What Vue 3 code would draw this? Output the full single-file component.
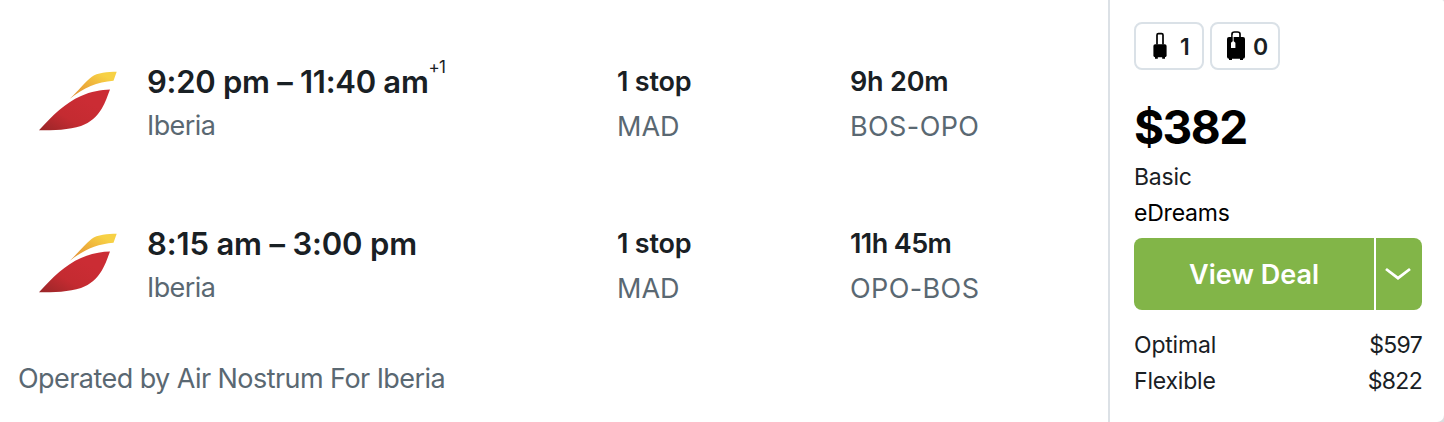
<template>
  <div class="card">
    <div class="legs">
      <div v-for="(leg, index) in legs" :key="index" class="leg">
        <svg class="logo" viewBox="0 0 80 62" width="80" height="62">
          <defs>
            <linearGradient :id="'red' + index" x1="0" y1="1" x2="0.7" y2="0.3">
              <stop offset="0" stop-color="#982628" />
              <stop offset="0.5" stop-color="#c42b31" />
              <stop offset="1" stop-color="#cb2c34" />
            </linearGradient>
            <linearGradient :id="'yellow' + index" x1="0" y1="1" x2="1" y2="0">
              <stop offset="0" stop-color="#e08a33" />
              <stop offset="0.5" stop-color="#efb43c" />
              <stop offset="0.8" stop-color="#f7d145" />
            </linearGradient>
          </defs>
          <path
            :fill="`url(#yellow${index})`"
            d="M31.5 29C41 20 47 12 53.500 7C59 2.500 70 1.700 78.700 1.700L75.500 10.700C59 12 46 17.500 31.500 29Z"
          />
          <path
            :fill="`url(#red${index})`"
            d="M1 60.300C15 45 27 33 43 26C53 21.500 63 19.700 72 19.500C69.500 26 67.500 32.500 63.700 38.700C59 46.500 52.500 52.500 43 56C31 60 16 60.300 1 60.300Z"
          />
        </svg>
        <div class="times">
          <div class="time">{{ leg.time }}<sup v-if="leg.plus">{{ leg.plus }}</sup></div>
          <div class="sub airline">{{ leg.airline }}</div>
        </div>
        <div class="stops">
          <div class="main">{{ leg.stops }}</div>
          <div class="sub code">{{ leg.via }}</div>
        </div>
        <div class="duration">
          <div class="main">{{ leg.duration }}</div>
          <div class="sub code route">{{ leg.route }}</div>
        </div>
      </div>
      <div class="sub operated">Operated by Air Nostrum For Iberia</div>
    </div>

    <div class="deal">
      <div class="bags">
        <div class="bag carry-on">
          <svg class="bag-icon" viewBox="0 0 20 32" width="20" height="32">
            <path d="M7 16.500V7Q7 5.600 8.400 5.600H11.600Q13 5.600 13 7V16.500" fill="none" stroke="#000" stroke-width="1.700" />
            <rect x="3.400" y="16.300" width="13.200" height="13" rx="1.800" />
            <path d="M5 28.500h2.800v2.200H5zM12.200 28.500H15v2.200h-2.800z" />
          </svg>
          <span>1</span>
        </div>
        <div class="bag">
          <svg class="bag-icon" viewBox="0 0 20 32" width="20" height="32">
            <path d="M6 9V6Q6 4 8.500 4H11.500Q14 4 14 6V9" fill="none" stroke="#000" stroke-width="1.700" />
            <rect x="1" y="9" width="18" height="21.800" rx="2" />
            <path d="M3 30h3v2H3zM14 30h3v2h-3z" />
            <path d="M7.200 7V13" stroke="#fff" stroke-width="0.900" />
            <path d="M5 14.700L7.200 12.800L9.400 14.700V20H5z" fill="#fff" />
          </svg>
          <span>0</span>
        </div>
      </div>
      <div class="price">$382</div>
      <div class="fare">Basic</div>
      <div class="provider">eDreams</div>
      <div class="actions">
        <button class="view">View Deal</button>
        <button class="more">
          <svg viewBox="0 0 26 14" width="26" height="14">
            <path d="M1 2L13 11.200L25 2" fill="none" stroke="#fff" stroke-width="2.800" />
          </svg>
        </button>
      </div>
      <div v-for="fare in fares" :key="fare.name" class="fare-row">
        <span>{{ fare.name }}</span>
        <span class="amount">{{ fare.price }}</span>
      </div>
    </div>
  </div>
</template>

<script setup>
const legs = [
  {
    time: '9:20 pm – 11:40 am',
    plus: '+1',
    airline: 'Iberia',
    stops: '1 stop',
    via: 'MAD',
    duration: '9h 20m',
    route: 'BOS-OPO'
  },
  {
    time: '8:15 am – 3:00 pm',
    airline: 'Iberia',
    stops: '1 stop',
    via: 'MAD',
    duration: '11h 45m',
    route: 'OPO-BOS'
  }
]

const fares = [
  { name: 'Optimal', price: '$597' },
  { name: 'Flexible', price: '$822' }
]
</script>

<style>
body {
  margin: 0;
  background: #d9dcdf;
}
</style>

<style scoped>
.card {
  display: flex;
  width: 1444px;
  height: 422px;
  overflow: hidden;
  box-sizing: border-box;
  background: #fff;
  border-radius: 0 2px 7px 0;
  font-family: Inter, "Liberation Sans", sans-serif;
  color: #192024;
  white-space: nowrap;
}

.legs {
  width: 1108px;
  padding-top: 60px;
  box-sizing: border-box;
}

.leg {
  display: flex;
  height: 88px;
  margin-bottom: 74px;
  padding-left: 38px;
}

.logo {
  margin-top: 10px;
  margin-right: 29px;
}

.times {
  width: 470px;
}

.stops {
  width: 233px;
}

.time {
  height: 44px;
  line-height: 44px;
  font-size: 31px;
  font-weight: 600;
  letter-spacing: -0.27px;
}

.leg:nth-child(2) .time {
  letter-spacing: -0.15px;
}

.time sup {
  font-size: 17px;
  font-weight: 400;
  line-height: 0;
  vertical-align: 20px;
  letter-spacing: -0.7px;
}

.main {
  height: 44px;
  line-height: 44px;
  font-size: 27px;
  font-weight: 600;
  letter-spacing: -0.2px;
}

.leg:nth-child(2) .duration .main {
  letter-spacing: -0.6px;
}

.sub {
  line-height: 44px;
  font-size: 27px;
  color: #5a6872;
}

.airline {
  letter-spacing: -0.6px;
}

.code {
  line-height: 46px;
}

.route {
  letter-spacing: 0.4px;
}

.operated {
  margin-top: -27px;
  padding-left: 18px;
  letter-spacing: -0.56px;
}

.deal {
  flex: 1;
  padding: 22px 22px 0 24px;
  border-left: 2px solid #dce1e6;
}

.bags {
  display: flex;
  gap: 6px;
}

.bag {
  display: flex;
  align-items: center;
  width: 70px;
  height: 48px;
  box-sizing: border-box;
  padding-left: 14px;
  border: 2px solid #dae1e7;
  border-radius: 8px;
  font-size: 23px;
  font-weight: 600;
}

.bag span {
  padding-top: 1px;
}

.bag-icon {
  margin-right: 7px;
  margin-top: -4px;
}

.carry-on .bag-icon {
  margin-right: 10px;
}

.price {
  margin-top: 27px;
  height: 62px;
  line-height: 61px;
  font-size: 46px;
  font-weight: 700;
  letter-spacing: -1.5px;
  color: #000;
}

.fare,
.provider,
.fare-row {
  height: 36px;
  line-height: 36px;
  font-size: 23px;
  letter-spacing: -0.2px;
}

.provider {
  color: #000;
}

.actions {
  display: flex;
  gap: 2px;
  margin: 7px 0 17px;
}

.actions button {
  display: flex;
  align-items: center;
  justify-content: center;
  height: 72px;
  padding: 0;
  border: 0;
  background: #82b548;
  color: #fff;
  font-family: inherit;
  font-size: 27px;
  font-weight: 600;
}

.actions .view {
  width: 240px;
  border-radius: 8px 0 0 8px;
}

.actions .more {
  width: 46px;
  padding-right: 2px;
  border-radius: 0 8px 8px 0;
}

.fare-row {
  display: flex;
  justify-content: space-between;
}

.amount {
  letter-spacing: -0.7px;
}
</style>
